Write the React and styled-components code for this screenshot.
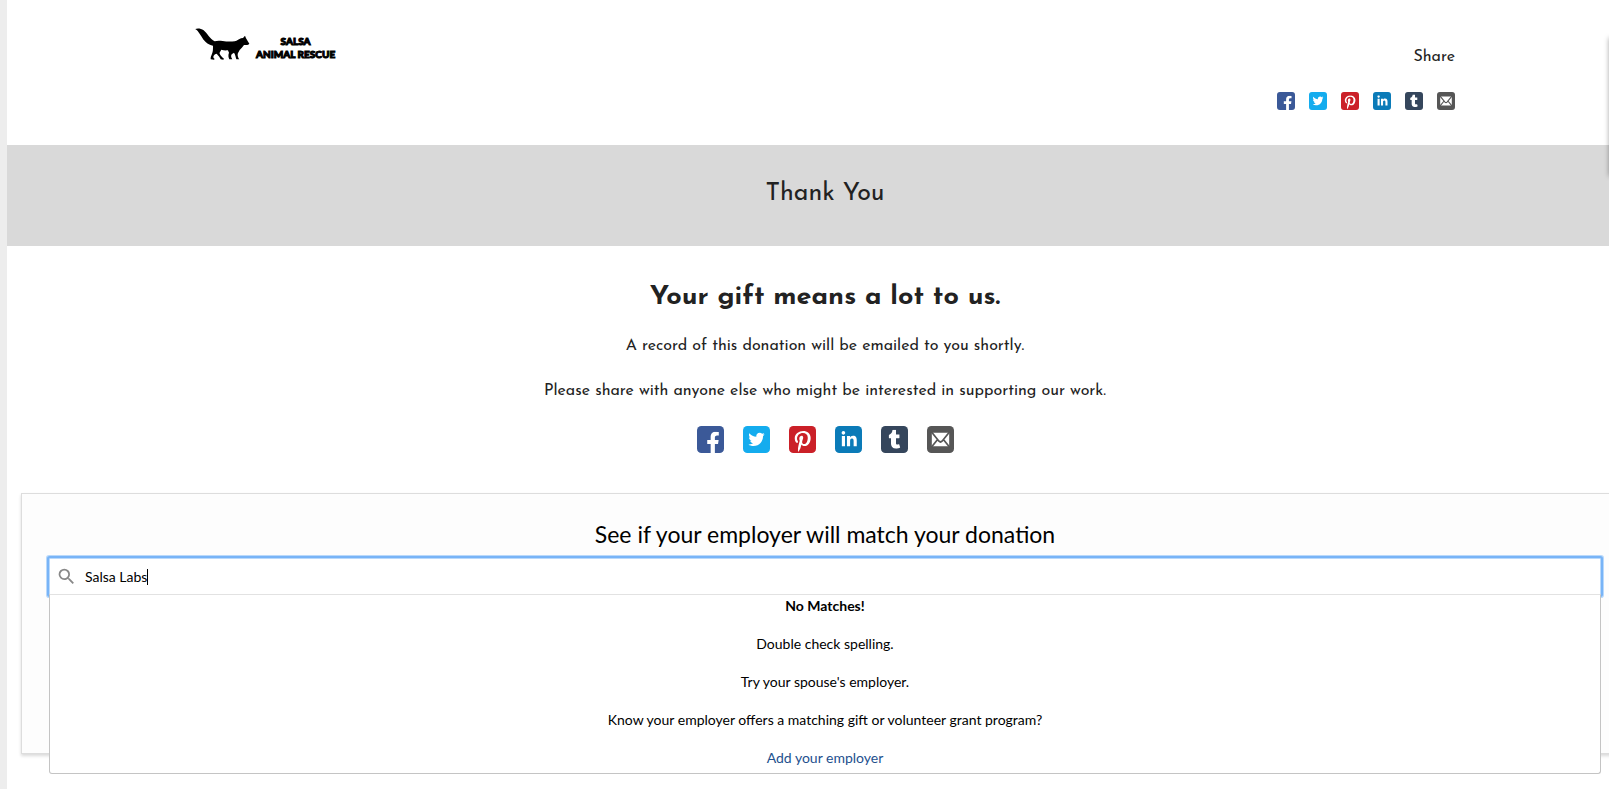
import React, { useState } from "react";
import styled, { createGlobalStyle } from "styled-components";
import { FaFacebookF, FaTwitter, FaPinterestP, FaLinkedinIn, FaTumblr } from "react-icons/fa";
import { MdSearch } from "react-icons/md";

const GlobalStyle = createGlobalStyle`
	* {
		box-sizing: border-box;
	}

	body {
		margin: 0;
		background: #ededed;
		color: #222;
		font-family: "Josefin Sans", Lato, sans-serif;
		font-size: 16px;
	}

	h1, h2, h3, p, ul {
		margin: 0;
		padding: 0;
	}
`;

const Viewport = styled.div`
	position: relative;
	overflow: hidden;
	min-height: 100vh;
	padding-left: 7px;
`;

/* the page is a little wider than the window and runs off its right side */
const Page = styled.div`
	min-height: 100vh;
	margin-right: -34px;
	background: #fff;
`;

const Header = styled.header`
	display: flex;
	justify-content: space-between;
	align-items: flex-start;
	max-width: 1260px;
	min-height: 145px;
	margin: 0 auto;
	padding: 28px 0;
`;

const Logo = styled.a`
	display: flex;
	align-items: center;
	gap: 6px;
	color: #000;
	text-decoration: none;
`;

const LogoText = styled.span`
	font-family: Lato, sans-serif;
	font-size: 10px;
	font-weight: 900;
	line-height: 13px;
	text-align: center;
	padding-top: 6px;
	-webkit-text-stroke: 1px #000;
`;

const ShareBox = styled.div`
	display: flex;
	flex-direction: column;
	align-items: flex-end;
	gap: 23px;
	padding-top: 17px;
`;

const ShareTitle = styled.p`
	font-size: 16px;
	line-height: 24px;
`;

const ShareList = styled.ul`
	display: flex;
	justify-content: center;
	gap: ${({ $gap }) => $gap}px;
	list-style: none;
`;

const ShareLink = styled.a`
	display: block;

	> svg {
		display: block;
		width: ${({ $size }) => $size}px;
		height: ${({ $size }) => $size}px;
	}
`;

const Banner = styled.div`
	background: #d9d9d9;
	padding: 33px 0 36px;
	text-align: center;
`;

const BannerTitle = styled.h1`
	font-size: 25px;
	font-weight: 400;
	line-height: 32px;
`;

const Message = styled.section`
	display: flex;
	flex-direction: column;
	align-items: center;
	padding: 34px 0 40px;
	text-align: center;
`;

const MessageTitle = styled.h2`
	font-size: 27px;
	font-weight: 700;
	line-height: 36px;
	margin-bottom: 18px;
`;

const MessageText = styled.p`
	font-size: 16px;
	line-height: 24px;

	& + & {
		margin: 21px 0 23px;
	}
`;

const Panel = styled.section`
	margin: 0 14px;
	padding: 26px 27px;
	height: 261px;
	background: #fdfdfd;
	border: 1px solid #ddd;
	box-shadow: 0 2px 3px rgba(0, 0, 0, 0.15);
	color: #000;
	font-family: Lato, sans-serif;
	text-align: center;
`;

const PanelTitle = styled.h3`
	font-size: 23px;
	font-weight: 400;
	line-height: 28px;
	margin-bottom: 10px;
`;

const Combo = styled.div`
	position: relative;
`;

const SearchField = styled.label`
	display: flex;
	align-items: center;
	height: 37px;
	padding-left: 6px;
	background: #fff;
	border: 1px solid #b9d9fb;
	border-radius: 1px;
	box-shadow: 0 0 0 2px #78b4f7, 0 0 0 3px #b9d9fb;

	svg {
		color: #888;
		width: 21px;
		height: 21px;
		margin-right: 8px;
	}
`;

const SearchInput = styled.input`
	field-sizing: content;
	padding: 0;
	border: 0;
	outline: 0;
	background: transparent;
	color: #000;
	caret-color: transparent;
	font-family: Lato, sans-serif;
	font-size: 14px;
	line-height: 20px;
`;

const Caret = styled.span`
	width: 1px;
	height: 16px;
	background: #000;
`;

const Results = styled.div`
	position: absolute;
	top: 36px;
	left: 0;
	right: 0;
	background: #fff;
	border: 1px solid #c4c4c4;
	border-top-color: #e2e2e2;
	border-radius: 0 0 3px 3px;
	font-size: 14px;
	line-height: 20px;
	padding: 1px 0 5px;

	p + p {
		margin-top: 18px;
	}

	a {
		color: #23508e;
		text-decoration: none;
	}
`;

/* shadow cast by the side tab that sits just outside the window */
const SideTab = styled.div`
	position: absolute;
	top: 38px;
	left: 100%;
	width: 20px;
	height: 138px;
	box-shadow: 0 0 5px rgba(0, 0, 0, 0.35);
`;

const Fox = () => (
	<svg width="55" height="33" viewBox="45 55 165 99" fill="#000" aria-hidden="true">
		<path d="M46 58 C52 55 63 56 71 62 C81 70 90 88 104 95 C112 92 120 93 128 94 C140 96 152 96 164 95 C172 93 177 89 183 86 L189 85 L195 78 L198 86 C202 92 205 98 208 102 C206 106 199 106 192 106 C188 112 183 117 179 121 C177 127 172 130 173 137 C174 142 175 146 178 149 L169 149 C167 142 166 135 162 129 C159 131 155 132 154 136 C152 140 155 145 157 149 L148 149 C145 143 144 136 147 129 C145 126 145 123 143 122 C136 123 130 122 124 120 C121 126 118 128 119 132 C122 138 127 143 132 147 L130 150 L122 149 C120 143 115 138 110 132 C107 132 103 134 101 138 C99 142 100 145 104 148 L102 150 L92 149 C91 143 94 138 96 132 C99 125 99 118 99 108 C92 107 84 104 77 97 C67 88 60 72 53 64 C50 61 48 60 46 58 Z" />
	</svg>
);

const Envelope = () => (
	<>
		<rect x="5" y="7" width="18" height="14" fill="#fff" />
		<path d="M4.5 6 L12.4 15.8 Q14 17.4 15.6 15.8 L23.5 6 M4.5 22 L11 14 M23.5 22 L17 14" fill="none" stroke="#565656" strokeWidth="1.8" />
	</>
);

const networks = [
	{ name: "Facebook", color: "#3b5998", glyph: <FaFacebookF x="5.4" y="6" size="22.4" /> },
	{ name: "Twitter", color: "#14acee", glyph: <FaTwitter x="5.5" y="5.3" size="17" /> },
	{ name: "Pinterest", color: "#cb2028", glyph: <FaPinterestP x="3.2" y="5" size="22" /> },
	{ name: "LinkedIn", color: "#0b7bb8", glyph: <FaLinkedinIn x="5.7" y="5.2" size="18" /> },
	{ name: "Tumblr", color: "#35465c", glyph: <FaTumblr x="4.2" y="3.9" size="19.6" /> },
	{ name: "Email", color: "#565656", glyph: <Envelope /> },
];

const ShareButtons = ({ size, gap }) => (
	<ShareList $gap={gap}>
		{networks.map(({ name, color, glyph }) => (
			<li key={name}>
				<ShareLink href="#" $size={size} aria-label={name}>
					<svg viewBox="0 0 28 28" color="#fff">
						<rect width="28" height="28" rx="4.5" fill={color} />
						{glyph}
					</svg>
				</ShareLink>
			</li>
		))}
	</ShareList>
);

const EmployerSearch = () => {
	const [employer, setEmployer] = useState("Salsa Labs");

	return (
		<Combo>
			<SearchField>
				<MdSearch aria-hidden="true" />
				<SearchInput
					type="text"
					aria-label="Employer"
					value={employer}
					onChange={(e) => setEmployer(e.target.value)}
				/>
				<Caret />
			</SearchField>
			<Results>
				<p>
					<strong>No Matches!</strong>
				</p>
				<p>Double check spelling.</p>
				<p>Try your spouse's employer.</p>
				<p>Know your employer offers a matching gift or volunteer grant program?</p>
				<p>
					<a href="#">Add your employer</a>
				</p>
			</Results>
		</Combo>
	);
};

export default function App() {
	return (
		<>
			<GlobalStyle />
			<Viewport>
				<Page>
					<Header>
						<Logo href="#">
							<Fox />
							<LogoText>
								SALSA
								<br />
								ANIMAL RESCUE
							</LogoText>
						</Logo>
						<ShareBox>
							<ShareTitle>Share</ShareTitle>
							<ShareButtons size={18} gap={14} />
						</ShareBox>
					</Header>
					<Banner>
						<BannerTitle>Thank You</BannerTitle>
					</Banner>
					<Message>
						<MessageTitle>Your gift means a lot to us.</MessageTitle>
						<MessageText>A record of this donation will be emailed to you shortly.</MessageText>
						<MessageText>Please share with anyone else who might be interested in supporting our work.</MessageText>
						<ShareButtons size={27} gap={19} />
					</Message>
					<Panel>
						<PanelTitle>See if your employer will match your donation</PanelTitle>
						<EmployerSearch />
					</Panel>
				</Page>
				<SideTab />
			</Viewport>
		</>
	);
}
